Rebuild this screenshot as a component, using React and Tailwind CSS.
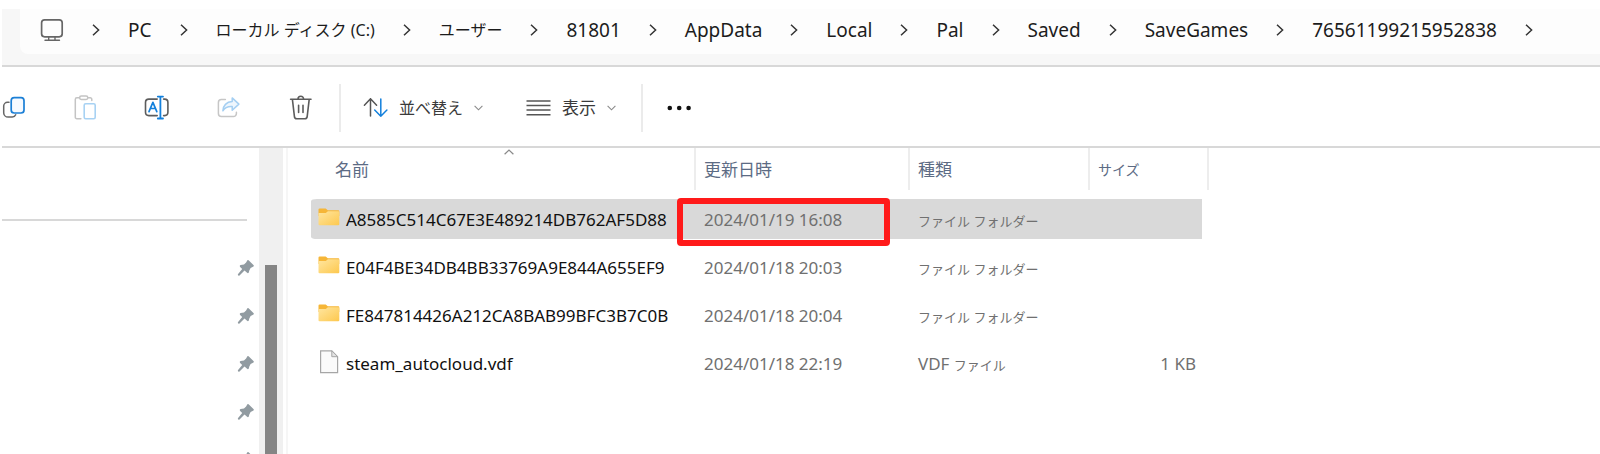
import React from "react";

const crumbs = [
  { label: "PC" },
  { label: "ローカル ディスク (C:)", ja: true },
  { label: "ユーザー", ja: true },
  { label: "81801" },
  { label: "AppData" },
  { label: "Local" },
  { label: "Pal" },
  { label: "Saved" },
  { label: "SaveGames" },
  { label: "76561199215952838" },
];

const files = [
  { name: "A8585C514C67E3E489214DB762AF5D88", date: "2024/01/19 16:08", folder: true, selected: true },
  { name: "E04F4BE34DB4BB33769A9E844A655EF9", date: "2024/01/18 20:03", folder: true },
  { name: "FE847814426A212CA8BAB99BFC3B7C0B", date: "2024/01/18 20:04", folder: true },
  { name: "steam_autocloud.vdf", date: "2024/01/18 22:19", size: "1 KB" },
];

function CrumbChevron() {
  return (
    <svg className="h-3 w-2 shrink-0" viewBox="0 0 8 12" fill="none" stroke="#333" strokeWidth="1.5" aria-hidden="true">
      <path d="M1 0.8 6.6 6 1 11.2" />
    </svg>
  );
}

function DownChevron() {
  return (
    <svg className="h-1.5 w-[9px] shrink-0" viewBox="0 0 9 6" fill="none" stroke="#8a8a8a" strokeWidth="1.1" aria-hidden="true">
      <path d="M0.6 0.8 4.5 4.8 8.4 0.8" />
    </svg>
  );
}

function MonitorIcon() {
  return (
    <svg className="h-6 w-6 shrink-0" viewBox="40 17 24 24" fill="none" stroke="#666" strokeWidth="1.7" aria-hidden="true">
      <rect x="41.6" y="18.8" width="20.6" height="17" rx="3" />
      <path d="M48.7 36v3.2M55 36v3.2M45 39.3h14.5" strokeLinecap="round" strokeWidth="1.4" />
    </svg>
  );
}

function ToolIcon({ viewBox, children }) {
  return (
    <svg className="h-[26px] w-[26px]" viewBox={viewBox} fill="none" strokeWidth="1.5" strokeLinecap="round" strokeLinejoin="round" aria-hidden="true">
      {children}
    </svg>
  );
}

const tools = [
  {
    label: "コピー",
    icon: (
      <ToolIcon viewBox="0 94 26 26">
        <path d="M9 101.3H7.5a3.8 3.8 0 0 0-3.8 3.8v6.6a4.4 4.4 0 0 0 4.4 4.4h4.2a3.8 3.8 0 0 0 3.4-2.3" stroke="#666" />
        <rect x="11.2" y="96.7" width="12.8" height="15.3" rx="3" stroke="#1b7fd6" strokeWidth="1.7" fill="#f6faff" />
      </ToolIcon>
    ),
  },
  {
    label: "貼り付け",
    disabled: true,
    icon: (
      <ToolIcon viewBox="72 94 26 26">
        <path d="M79.5 96.8h-2.6a1.6 1.6 0 0 0-1.6 1.6v17.8a1.6 1.6 0 0 0 1.6 1.6h4M88 96.8h2.2a1.6 1.6 0 0 1 1.6 1.6v1" stroke="#c4c4c4" />
        <rect x="79.6" y="95.1" width="8.2" height="3.4" rx="1.7" stroke="#c4c4c4" />
        <rect x="84.2" y="102.8" width="11" height="15" rx="1.5" stroke="#a8d2f3" strokeWidth="1.6" />
      </ToolIcon>
    ),
  },
  {
    label: "名前の変更",
    icon: (
      <ToolIcon viewBox="144 94 26 26">
        <path d="M157.2 98.1h-8.4a3.3 3.3 0 0 0-3.3 3.3v9.9a3.3 3.3 0 0 0 3.3 3.3h8.4M163.6 98.1h1a3.3 3.3 0 0 1 3.3 3.3v9.9a3.3 3.3 0 0 1-3.3 3.3h-1" stroke="#5c5c5c" strokeWidth="1.6" />
        <path d="M157.8 95.6h5.2M157.8 117.5h5.2M160.4 95.6v21.9" stroke="#1380dc" strokeWidth="1.8" />
        <path d="M149 110.6l3.9-9.2 3.9 9.2M150.4 107.5h5" stroke="#1380dc" strokeWidth="1.7" />
      </ToolIcon>
    ),
  },
  {
    label: "共有",
    disabled: true,
    icon: (
      <ToolIcon viewBox="216 94 26 26">
        <path d="M225.4 98.4h-4a3 3 0 0 0-3 3v11.2a3 3 0 0 0 3 3h12a3 3 0 0 0 3-3v-1.3" stroke="#c6c6c6" />
        <path d="M232.2 96.9l6.7 6.2-6.7 6.2v-3.7c-4.3-.3-7.4 1-9.3 4.2.1-5.1 3.6-9 9.3-9.2z" stroke="#a5cff2" fill="#eef6fd" />
      </ToolIcon>
    ),
  },
  {
    label: "削除",
    icon: (
      <ToolIcon viewBox="287 94 26 26">
        <path d="M289.6 98.2h20.4M291.4 98.4l2 17a2.4 2.4 0 0 0 2.4 2.3h8a2.4 2.4 0 0 0 2.4-2.3l2-17M297 98a2.8 2.8 0 0 1 5.6 0M297.6 104.2v7.2M302 104.2v7.2" stroke="#5c5c5c" strokeWidth="1.6" />
      </ToolIcon>
    ),
  },
];

function FolderIcon() {
  return (
    <svg className="mb-1.5 h-[18px] w-[22px] shrink-0" viewBox="0 0 22 18" aria-hidden="true">
      <defs>
        <linearGradient id="folder-front" x1="0" y1="0" x2="1" y2="1">
          <stop offset="0" stopColor="#ffe6a0" />
          <stop offset="1" stopColor="#fdc84e" />
        </linearGradient>
      </defs>
      <path d="M0.5 1.6Q0.5 .4 1.7 .4H7.7L9.8 2.3H20.3Q21.3 2.3 21.3 3.4V8H.5z" fill="#f6b637" />
      <path d="M.5 4.9H7.8L9.9 3.3H20.2Q21.3 3.3 21.3 4.4V16.3Q21.3 17.3 20.2 17.3H1.6Q.5 17.3 .5 16.3z" fill="url(#folder-front)" />
    </svg>
  );
}

function FileIcon() {
  return (
    <svg className="mb-1 h-6 w-[22px] shrink-0" viewBox="0 0 22 24" aria-hidden="true">
      <path d="M2.6.9H13.8L19.6 6.7V22.6H2.6z" fill="#fafafa" stroke="#a6a6a6" strokeWidth="1.2" />
      <path d="M13.8 .9V6.7H19.6z" fill="#e4e4e4" stroke="#a6a6a6" strokeWidth="1" />
    </svg>
  );
}

function PinIcon() {
  return (
    <svg className="h-[18px] w-[18px]" viewBox="0 0 18 18" aria-hidden="true">
      <path d="M10.4 1.2Q11 .8 11.6 1.3L16.7 6.2Q17.1 6.8 16.5 7.5L13.6 8.9 12.3 11.4 11.8 13.6Q11 14.6 10.1 13.8L7.5 11.6 2.5 16.5Q1.5 17 1 16.3T1.3 14.8L5.2 9.9 2.9 7.7Q2.4 6.4 3.6 6.1L7 5.4 9.1 3.6z" fill="#919ba1" />
    </svg>
  );
}

function HeadCell({ children, className }) {
  return (
    <th className="p-0 text-left align-top font-normal">
      <div className={"relative flex h-[42px] items-center border-r-2 border-[#ededed] pt-0.5 text-[#5c6b84] " + className}>{children}</div>
    </th>
  );
}

const cell = "border-y-4 border-transparent bg-clip-padding px-0 pt-0.5 pb-0 ";

export default function App() {
  return (
    <div className="flex min-h-screen flex-col overflow-hidden bg-white pl-0.5 font-['Noto_Sans','Noto_Sans_CJK_JP',sans-serif]">
      <header className="mt-[9px] border-b-2 border-[#d8d8d8] bg-[#f7f7f7] pb-[11px] pl-[18px]">
        <nav aria-label="パス" className="flex h-[45px] items-center gap-7 overflow-hidden rounded-bl-lg bg-[#fdfdfd] pb-1 pl-5">
          <MonitorIcon />
          <CrumbChevron />
          {crumbs.map((c) => (
            <React.Fragment key={c.label}>
              <a href="#" className={"shrink-0 whitespace-nowrap leading-7 text-[#1c1c1c] " + (c.ja ? "text-base" : "text-[19px]")}>
                {c.label}
              </a>
              <CrumbChevron />
            </React.Fragment>
          ))}
        </nav>
      </header>

      <div className="-ml-0.5 flex h-[79px] items-center pt-0.5" role="toolbar" aria-label="コマンド">
        <div className="flex gap-[46px]">
          {tools.map((t) => (
            <button key={t.label} type="button" aria-label={t.label} disabled={t.disabled}>
              {t.icon}
            </button>
          ))}
        </div>
        <div className="ml-[25px] h-12 w-0.5 bg-[#ebebeb]" />
        <button type="button" className="ml-[22px] flex items-center gap-[11px] text-base text-[#3a3a3a]">
          <svg className="h-[22px] w-[25px]" viewBox="363 96 25 22" fill="none" strokeWidth="1.5" strokeLinecap="round" strokeLinejoin="round" aria-hidden="true">
            <path d="M370.5 115V97.8M364.4 104.2l6.1-6.4 6.1 6.4" stroke="#555" />
            <path d="M380.8 98v17.2M374.7 109l6.1 6.2 6.1-6.2" stroke="#1380dc" />
          </svg>
          <span>並べ替え</span>
          <DownChevron />
        </button>
        <button type="button" className="ml-[43px] flex items-center gap-[11px] text-base text-[#3a3a3a]">
          <svg className="h-4 w-[25px]" viewBox="0 0 25 16" stroke="#555" strokeWidth="1.4" aria-hidden="true">
            <path d="M.5 1h24M.5 5.5h24M.5 10h24M.5 14.7h24" />
          </svg>
          <span className="text-[17px]">表示</span>
          <DownChevron />
        </button>
        <div className="ml-[25px] h-12 w-0.5 bg-[#ebebeb]" />
        <button type="button" aria-label="その他" className="ml-6">
          <svg className="h-1.5 w-[25px]" viewBox="0 0 25 6" fill="#111" aria-hidden="true">
            <circle cx="2.8" cy="3" r="2.3" />
            <circle cx="12.2" cy="3" r="2.3" />
            <circle cx="21.6" cy="3" r="2.3" />
          </svg>
        </button>
      </div>

      <main className="flex h-0 grow overflow-hidden border-t-2 border-[#d8d8d8]">
        <aside className="flex w-[257px] shrink-0 flex-col overflow-hidden">
          <div className="mr-3 h-[73px] shrink-0 border-b-2 border-[#d8d8d8]" />
          <ul className="flex flex-col items-end pt-[23px] pr-1">
            {[1, 2, 3, 4, 5].map((n) => (
              <li key={n} className="flex h-12 items-center">
                <PinIcon />
              </li>
            ))}
          </ul>
        </aside>
        <div className="w-6 shrink-0 bg-[#f0f0f0] px-1.5 pt-[117px]">
          <div className="h-full bg-[#858585]" />
        </div>
        <div className="ml-[3px] w-0.5 shrink-0 bg-[#f6f6f6]" />

        <section className="grow overflow-hidden pl-[23px]">
          <table className="w-[898px] table-fixed border-separate border-spacing-0 text-[17px] leading-6">
            <colgroup>
              <col className="w-[385px]" />
              <col className="w-[214px]" />
              <col className="w-[180px]" />
              <col className="w-[119px]" />
            </colgroup>
            <thead>
              <tr className="h-[47px]">
                <HeadCell className="pl-6">
                  名前
                  <svg className="absolute top-px left-[193px] h-1.5 w-2.5" viewBox="0 0 10 6" fill="none" stroke="#8a8a8a" strokeWidth="1.2" aria-hidden="true">
                    <path d="M.6 5.2 5 1 9.4 5.2" />
                  </svg>
                </HeadCell>
                <HeadCell className="pl-2">更新日時</HeadCell>
                <HeadCell className="pl-2">種類</HeadCell>
                <HeadCell className="pl-2 text-sm">サイズ</HeadCell>
              </tr>
            </thead>
            <tbody>
              {files.map((f) => {
                const bg = f.selected ? "bg-[#d9d9d9] " : "";
                return (
                  <tr key={f.name} className="h-12 text-[#707070]">
                    <td className={cell + bg + "rounded-l-md"}>
                      <div className="flex items-center gap-1.5 pl-[7px] text-[#101010]">
                        {f.folder ? <FolderIcon /> : <FileIcon />}
                        <span className="whitespace-nowrap">{f.name}</span>
                      </div>
                    </td>
                    <td className={cell + bg + "relative pl-2"}>
                      {f.date}
                      {f.selected && <div className="absolute -top-px -left-[19px] h-12 w-[213px] rounded border-[6px] border-[#ff1a1a]" />}
                    </td>
                    <td className={cell + bg + "pl-2"}>
                      {f.folder ? (
                        <span className="text-[13px]">ファイル フォルダー</span>
                      ) : (
                        <>
                          VDF <span className="text-[13px]">ファイル</span>
                        </>
                      )}
                    </td>
                    <td className={cell + bg + "rounded-r-md border-r-[7px] pr-1.5 text-right"}>{f.size}</td>
                  </tr>
                );
              })}
            </tbody>
          </table>
        </section>
      </main>
    </div>
  );
}
